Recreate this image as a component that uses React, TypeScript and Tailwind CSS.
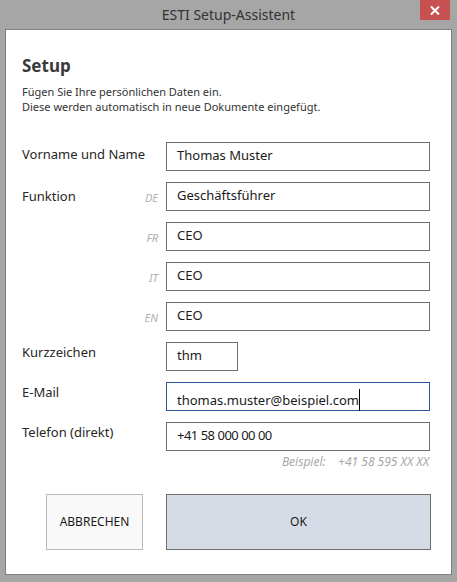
import React from "react";

const font = { fontFamily: '"Noto Sans", "Open Sans", sans-serif' };

function Field({
  value,
  width = "w-[264px]",
  focused = false,
  tight = false,
}: {
  value: string;
  width?: string;
  focused?: boolean;
  tight?: boolean;
}) {
  return (
    <div
      className={`${width} h-[29px] shrink-0 border bg-white pl-[10px] text-[13px] leading-[24px] text-[#1a1a1a] ${
        focused ? "border-[#2b579a]" : "border-[#6d6d6d]"
      }`}
    >
      <span className={tight ? "tracking-[-0.5px]" : ""}>{value}</span>
      {focused && <span className="inline-block h-[22px] w-px translate-y-[6px] bg-black" />}
    </div>
  );
}

function Row({
  label,
  lang,
  labelPad,
  children,
}: {
  label?: string;
  lang?: string;
  labelPad: string;
  children: React.ReactNode;
}) {
  return (
    <div className="flex items-start">
      <div
        className={`w-[122px] shrink-0 whitespace-nowrap text-[13px] leading-[18px] text-[#262626] ${labelPad}`}
      >
        {label}
      </div>
      <div className="w-[14px] shrink-0 pt-[8px] text-right text-[11px] italic leading-[16px] text-[#b0b0b0]">
        {lang}
      </div>
      <div className="ml-[8px]">{children}</div>
    </div>
  );
}

export default function App() {
  return (
    <div className="flex h-[582px] w-[457px] flex-col bg-[#a6a6a6]" style={font}>
      <div className="relative flex h-[29px] shrink-0 items-center justify-center">
        <span className="text-[14px] text-[#333333]">ESTI Setup-Assistent</span>
        <div className="absolute right-[7px] top-0 flex h-[20px] w-[30px] items-center justify-center bg-[#c75050]">
          <svg width="10" height="9" viewBox="0 0 10 9">
            <path d="M1 0.5 L9 8.5 M9 0.5 L1 8.5" stroke="white" strokeWidth="2" />
          </svg>
        </div>
      </div>

      <div className="mx-[5px] h-[546px] border border-[#7f7f7f] bg-white pl-[16px]">
        <h1 className="mt-[26px] text-[17px] font-bold leading-[20px] text-[#3a3a3a]">Setup</h1>
        <p className="mt-[8px] text-[11px] leading-[15px] text-[#333333]">
          Fügen Sie Ihre persönlichen Daten ein.
          <br />
          Diese werden automatisch in neue Dokumente eingefügt.
        </p>

        <div className="mt-[28px] flex flex-col gap-[11px]">
          <Row label="Vorname und Name" labelPad="pt-[3px]">
            <Field value="Thomas Muster" />
          </Row>
          <Row label="Funktion" lang="DE" labelPad="pt-[5px]">
            <Field value="Geschäftsführer" />
          </Row>
          <Row lang="FR" labelPad="">
            <Field value="CEO" />
          </Row>
          <Row lang="IT" labelPad="">
            <Field value="CEO" />
          </Row>
          <Row lang="EN" labelPad="">
            <Field value="CEO" />
          </Row>
          <Row label="Kurzzeichen" labelPad="pt-[1px]">
            <Field value="thm" width="w-[72px]" />
          </Row>
          <Row label="E-Mail" labelPad="pt-[1px]">
            <Field value="thomas.muster@beispiel.com" focused />
          </Row>
          <Row label="Telefon (direkt)" labelPad="pt-[1px]">
            <Field value="+41 58 000 00 00" tight />
          </Row>
        </div>

        <div className="mt-[3px] w-[407px] text-right text-[12px] italic leading-[16px] text-[#a8a8a8]">
          Beispiel:&nbsp;&nbsp;&nbsp;&nbsp;+41 58 595 XX XX
        </div>

        <div className="mt-[24px] flex items-start">
          <button className="ml-[24px] h-[56px] w-[97px] border border-[#b9b9b9] bg-[#f9f9f9] text-[12px] text-[#1a1a1a]">
            ABBRECHEN
          </button>
          <button className="ml-[23px] h-[56px] w-[265px] border border-[#6d6d6d] bg-[#d5dce6] text-[12px] text-[#1a1a1a]">
            OK
          </button>
        </div>
      </div>
    </div>
  );
}
